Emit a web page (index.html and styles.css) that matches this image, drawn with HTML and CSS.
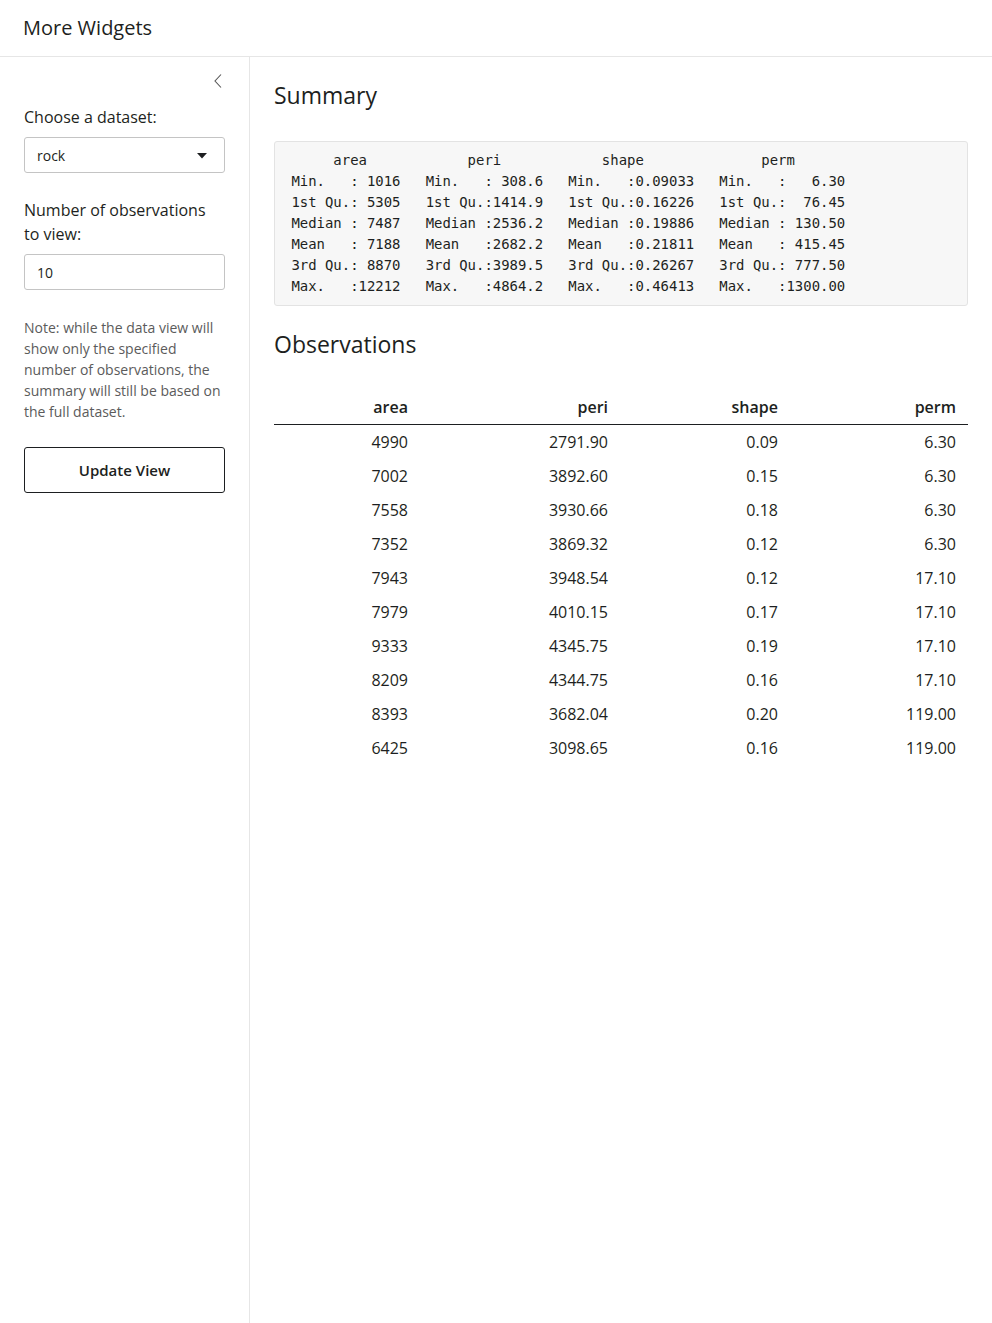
FILE: index.html
```html
<!DOCTYPE html>
<html lang="en">
<head>
<meta charset="utf-8">
<title>More Widgets</title>
<link rel="stylesheet" href="styles.css">
</head>
<body>
<div class="page">
  <header class="navbar">
    <h1 class="page-title">More Widgets</h1>
  </header>
  <div class="layout">
    <aside class="sidebar">
      <div class="toggle-row">
        <svg class="chevron" width="10" height="16" viewBox="0 0 10 16" aria-hidden="true">
          <path d="M8 1.5 L2 8 L8 14.5" fill="none" stroke="#555" stroke-width="1.1"/>
        </svg>
      </div>
      <div class="form-group">
        <label class="control-label">Choose a dataset:</label>
        <div class="select-box">
          <span class="select-value">rock</span>
          <svg class="caret" width="10" height="6" viewBox="0 0 10 6" aria-hidden="true">
            <path d="M0 0 L10 0 L5 5.5 Z" fill="#1d1f21"/>
          </svg>
        </div>
      </div>
      <div class="form-group">
        <label class="control-label">Number of observations to view:</label>
        <div class="text-input">10</div>
      </div>
      <p class="help-text">Note: while the data view will show only the specified number of observations, the summary will still be based on the full dataset.</p>
      <button class="btn">Update View</button>
    </aside>
    <main class="main">
      <h3 class="section-title">Summary</h3>
      <pre class="summary">      area            peri            shape              perm        
 Min.   : 1016   Min.   : 308.6   Min.   :0.09033   Min.   :   6.30  
 1st Qu.: 5305   1st Qu.:1414.9   1st Qu.:0.16226   1st Qu.:  76.45  
 Median : 7487   Median :2536.2   Median :0.19886   Median : 130.50  
 Mean   : 7188   Mean   :2682.2   Mean   :0.21811   Mean   : 415.45  
 3rd Qu.: 8870   3rd Qu.:3989.5   3rd Qu.:0.26267   3rd Qu.: 777.50  
 Max.   :12212   Max.   :4864.2   Max.   :0.46413   Max.   :1300.00  </pre>
      <h3 class="section-title obs-title">Observations</h3>
      <table class="data-table">
        <thead>
          <tr>
            <th class="c1">area</th>
            <th class="c2">peri</th>
            <th class="c3">shape</th>
            <th class="c4">perm</th>
          </tr>
        </thead>
        <tbody>
          <tr><td>4990</td><td>2791.90</td><td>0.09</td><td>6.30</td></tr>
          <tr><td>7002</td><td>3892.60</td><td>0.15</td><td>6.30</td></tr>
          <tr><td>7558</td><td>3930.66</td><td>0.18</td><td>6.30</td></tr>
          <tr><td>7352</td><td>3869.32</td><td>0.12</td><td>6.30</td></tr>
          <tr><td>7943</td><td>3948.54</td><td>0.12</td><td>17.10</td></tr>
          <tr><td>7979</td><td>4010.15</td><td>0.17</td><td>17.10</td></tr>
          <tr><td>9333</td><td>4345.75</td><td>0.19</td><td>17.10</td></tr>
          <tr><td>8209</td><td>4344.75</td><td>0.16</td><td>17.10</td></tr>
          <tr><td>8393</td><td>3682.04</td><td>0.20</td><td>119.00</td></tr>
          <tr><td>6425</td><td>3098.65</td><td>0.16</td><td>119.00</td></tr>
        </tbody>
      </table>
    </main>
  </div>
</div>
</body>
</html>
```

FILE: styles.css
```css
* { box-sizing: border-box; }

html, body {
  margin: 0;
  padding: 0;
  background: #ffffff;
}

body {
  font-family: "Open Sans", "Liberation Sans", sans-serif;
  font-size: 16px;
  line-height: 1.5;
  color: #1d1f21;
}

.page {
  display: flex;
  flex-direction: column;
  min-height: 100vh;
}

.navbar {
  height: 57px;
  border-bottom: 1px solid #e6e6e6;
  display: flex;
  align-items: center;
  padding: 0 23px;
  flex: none;
}

.page-title {
  margin: 0;
  font-size: 20px;
  font-weight: 400;
  line-height: 1.2;
  padding-bottom: 1px;
}

.layout {
  flex: 1;
  display: grid;
  grid-template-columns: 250px 1fr;
}

.sidebar {
  border-right: 1px solid #e6e6e6;
  padding: 12px 24px 24px 24px;
}

.toggle-row {
  height: 24px;
  display: flex;
  justify-content: flex-end;
  align-items: center;
  padding-right: 2px;
  margin-bottom: 12px;
}

.chevron { display: block; }

.form-group {
  margin-bottom: 25px;
}

.control-label {
  display: block;
  font-size: 16px;
  line-height: 24px;
  margin-bottom: 8px;
}

.select-box,
.text-input {
  height: 36px;
  border: 1px solid #c4c4c4;
  border-radius: 3px;
  display: flex;
  align-items: center;
  padding: 0 12px;
  font-size: 14px;
  background: #fff;
}

.select-box {
  justify-content: space-between;
  padding-right: 17px;
}

.caret { display: block; margin-top: 1px; }

.help-text {
  margin: 27px 0 25px 0;
  font-size: 14px;
  line-height: 21px;
  color: #5b5b5b;
}

.btn {
  display: block;
  width: 100%;
  height: 46px;
  border: 1px solid #1d1f21;
  border-radius: 3px;
  background: #fff;
  font-family: "Open Sans", "Liberation Sans", sans-serif;
  font-size: 15px;
  font-weight: 600;
  color: #1d1f21;
  padding: 0;
}

.main {
  padding: 24px;
}

.section-title {
  margin: 0 0 31px 0;
  font-size: 23px;
  font-weight: 400;
  line-height: 29px;
}

.obs-title {
  margin-bottom: 31px;
}

.summary {
  margin: 0 0 24px 0;
  padding: 8px;
  background: #f7f7f7;
  border: 1px solid #e3e3e3;
  border-radius: 3px;
  font-family: "DejaVu Sans Mono", "Liberation Mono", monospace;
  font-size: 13.95px;
  line-height: 21px;
  color: #1d1f21;
  white-space: pre;
  overflow: hidden;
}

.data-table {
  width: 100%;
  border-collapse: collapse;
  table-layout: fixed;
  font-size: 16px;
}

.data-table th,
.data-table td {
  text-align: right;
  padding: 5px 12px;
  line-height: 24px;
}

.data-table th {
  font-weight: 600;
  border-bottom: 1px solid #1d1f21;
}

.c1 { width: 146px; }
.c2 { width: 200px; }
.c3 { width: 170px; }
.c4 { width: 178px; }
```
